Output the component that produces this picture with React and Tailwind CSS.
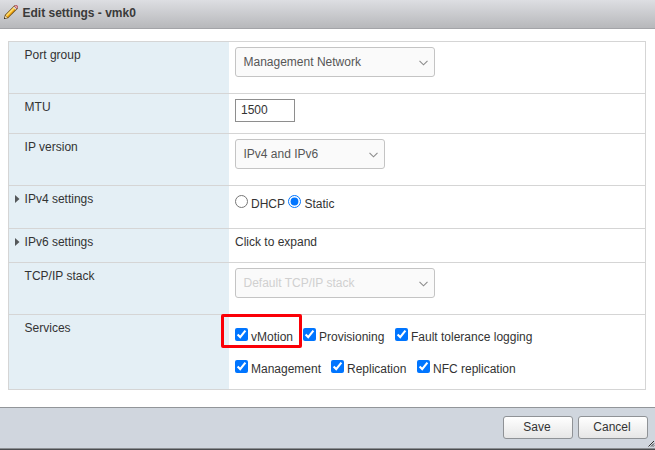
import React from "react";

function PencilIcon() {
  return (
    <svg width="16" height="16" viewBox="0 0 16 16" className="block">
      <path d="M1 15 L1.8 11 L11.3 1.5 L12.4 1 L15 3.6 L14.6 4.7 L5 14.2 Z" fill="#6b4a14" />
      <path d="M2.7 11.4 L11 3.1 L13 5.1 L4.7 13.4 Z" fill="#f5a914" />
      <path d="M2.7 11.2 L10.8 3.1 L11.9 4.2 L3.8 12.3 Z" fill="#ffdf70" />
      <path d="M1.8 14.2 L2.5 11.7 L4.4 13.6 Z" fill="#f8e6c4" />
      <path d="M10.3 3.6 L11.4 2.5 L13.6 4.7 L12.5 5.8 Z" fill="#d5dae0" />
      <path d="M11.3 2.4 L12.4 1 L13.9 1.1 L15 2.2 L15 3.7 L13.7 4.8 Z" fill="#b9606c" />
      <path d="M11.9 2.4 L12.8 1.6 L14.4 3.2 L13.6 4.1 Z" fill="#f0b3b8" />
      <path d="M1 15 L1.4 13.4 L2.6 14.6 Z" fill="#1c1c1c" />
    </svg>
  );
}

function Row({ label, height, expandable, last, children }) {
  return (
    <div className={`flex ${height} ${last ? "" : "border-b border-[#d5d5d5]"}`}>
      <div className="flex w-[220px] shrink-0 items-start bg-[#e4eff5] pt-[5px]">
        <div className="flex h-4 w-[15.6px] shrink-0 items-center pl-[6px]">
          {expandable && (
            <svg width="5" height="8" viewBox="0 0 5 8">
              <path d="M0 0 L4.5 4 L0 8 Z" fill="#55585a" />
            </svg>
          )}
        </div>
        <span>{label}</span>
      </div>
      <div className="min-w-0 flex-1 pl-[6px]">{children}</div>
    </div>
  );
}

function Select({ width, muted, children }) {
  return (
    <div
      className={`flex h-[30px] items-center justify-between rounded-[3px] border border-[#c4c4c4] bg-[#fafafa] pr-[6px] pl-[7.5px] ${width} ${
        muted ? "text-[#d0d0d0]" : "text-[#565656]"
      }`}
    >
      <span>{children}</span>
      <svg width="9" height="6" viewBox="0 0 9 6" fill="none" className="mt-[2px]">
        <path d="M0.5 0.8 L4.5 4.8 L8.5 0.8" stroke="#8c8c8c" strokeWidth="1.1" />
      </svg>
    </div>
  );
}

function Check({ width, children }) {
  return (
    <label className={`flex items-start ${width}`}>
      <input type="checkbox" defaultChecked className="m-0 h-[13px] w-[13px] shrink-0" />
      <span className="mt-px ml-[3px] leading-4">{children}</span>
    </label>
  );
}

function Button({ children }) {
  return (
    <button className="h-[23px] w-[70px] rounded-[3px] border border-[#8f9296] bg-linear-to-b from-white to-[#e6e6e6] pr-[2px] pb-px text-[#333]">
      {children}
    </button>
  );
}

export default function App() {
  return (
    <div className="flex h-[450px] w-[655px] flex-col overflow-hidden border-b border-[#4b4d50] bg-white font-['Liberation_Sans',Arial,sans-serif] text-[12px] leading-4 text-[#333]">
      <header className="flex h-[29px] items-start border-b border-[#a3a4a8] bg-linear-to-b from-[#dddee2] to-[#b7b8bb] pt-[5px] pl-[3px]">
        <div className="-mt-px">
          <PencilIcon />
        </div>
        <h1 className="ml-[3.5px] font-bold text-[#3a3a3a]">Edit settings - vmk0</h1>
      </header>

      <main className="h-[378px] px-2 pt-3">
        <div className="w-[638px] border border-[#d5d5d5]">
          <Row label="Port group" height="h-[52px]">
            <div className="pt-[5px]">
              <Select width="w-[200px]">Management Network</Select>
            </div>
          </Row>
          <Row label="MTU" height="h-[40px]">
            <div className="pt-[5px]">
              <input
                type="text"
                defaultValue="1500"
                className="block h-[23px] w-[60px] border border-[#8e8e8e] bg-white px-[5px] pb-px text-[#333]"
              />
            </div>
          </Row>
          <Row label="IP version" height="h-[52px]">
            <div className="pt-[5px]">
              <Select width="w-[150px]">IPv4 and IPv6</Select>
            </div>
          </Row>
          <Row label="IPv4 settings" height="h-[43px]" expandable>
            <div className="flex items-start pt-[9px]">
              <label className="flex w-[53px] items-start">
                <input type="radio" name="ipv4" className="m-0 h-[13px] w-[13px] shrink-0" />
                <span className="mt-px ml-[3px]">DHCP</span>
              </label>
              <label className="flex items-start">
                <input type="radio" name="ipv4" defaultChecked className="m-0 h-[13px] w-[13px] shrink-0" />
                <span className="mt-px ml-[3.5px]">Static</span>
              </label>
            </div>
          </Row>
          <Row label="IPv6 settings" height="h-[34px]" expandable>
            <div className="pt-[5px]">Click to expand</div>
          </Row>
          <Row label="TCP/IP stack" height="h-[52px]">
            <div className="pt-[5px]">
              <Select width="w-[200px]" muted>
                Default TCP/IP stack
              </Select>
            </div>
          </Row>
          <Row label="Services" height="h-[74px]" last>
            <div className="relative pt-[13px]">
              <div className="flex h-8 items-start">
                <Check width="w-[68px]">vMotion</Check>
                <Check width="w-[92px]">Provisioning</Check>
                <Check width="w-[150px]">Fault tolerance logging</Check>
              </div>
              <div className="flex items-start">
                <Check width="w-[96px]">Management</Check>
                <Check width="w-[86px]">Replication</Check>
                <Check width="w-[120px]">NFC replication</Check>
              </div>
              <div className="absolute top-[-1px] left-[-14px] h-[34px] w-[81px] rounded-[2px] border-3 border-[#fb0007]" />
            </div>
          </Row>
        </div>
      </main>

      <footer className="flex h-[42px] flex-col border-t border-b border-t-[#929599] border-b-[#8b8e92] bg-[#d0d6de]">
        <div className="flex items-start justify-end gap-[5px] pt-2 pr-[7px]">
          <Button>Save</Button>
          <Button>Cancel</Button>
        </div>
        <svg width="7" height="7" viewBox="0 0 7 7" className="mt-[1px] self-end">
          <path d="M0.5 6.5 L6 1 M3 6.5 L6 3.5 M5 6.6 L6.1 5.5" stroke="#2f2f2f" strokeWidth="1" />
        </svg>
      </footer>
    </div>
  );
}
